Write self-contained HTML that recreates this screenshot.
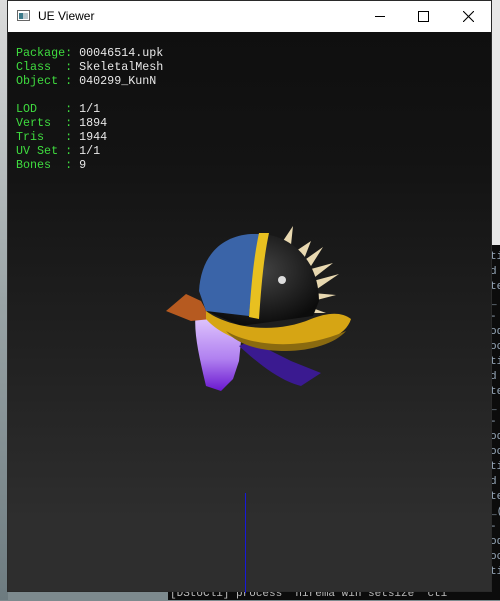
<!DOCTYPE html>
<html><head><style>
body{margin:0;width:500px;height:600px;overflow:hidden;background:#7d8a8e;position:relative;font-family:"Liberation Sans",sans-serif}
.con{position:absolute;background:#0c0c0c}
.win{position:absolute;left:7px;top:0;width:485px;height:592px;border:1px solid #2a2a2a;box-sizing:border-box;background:linear-gradient(#0f0f0f 31px,#131313 160px,#232323 380px,#2e2e2e 520px,#2e2e2e)}
.tb{position:absolute;left:0;top:0;width:483px;height:31px;background:#fff}
.tt{position:absolute;left:30px;top:8px;font-size:12px;color:#000}
.txt{position:absolute;left:8px;top:45px;font:11.7px/14px "Liberation Mono",monospace;color:#e8e8e8;white-space:pre;margin:0}
.g{color:#3fdc3f}
.ct{position:absolute;font:11px/14px "Liberation Mono",monospace;color:#bbb;white-space:pre}
</style></head><body>
<div style="position:absolute;left:0;top:0;width:8px;height:600px;background:linear-gradient(#dcdcdc,#9aa4a6 50%,#6d7b80)"></div>
<div class="con" style="left:168px;top:592px;width:332px;height:8px"></div>
<div class="ct" style="left:170px;top:587px">[DStoCli] process  hirema win setsize  cti</div>
<div class="con" style="left:490px;top:245px;width:10px;height:355px"></div>
<div style="position:absolute;left:490px;top:0;width:10px;height:245px;background:#e8e8e8"></div>
<div class="ct" style="left:490px;top:250px;color:#9ab;line-height:15px">ti
d
te
_
-
od
oc
ti
d
te
_
-
od
oc
ti
d
te
_(
-
od
oc
ti</div>
<div class="win">
<div class="tb">
<svg style="position:absolute;left:9px;top:9px" width="13" height="11"><rect x="0.5" y="0.5" width="12" height="10" fill="#fff" stroke="#666"/><rect x="2" y="3" width="4" height="6" fill="#3a7a8a"/><rect x="6" y="3" width="5" height="6" fill="#b9c7cc"/></svg>
<div class="tt">UE Viewer</div>
<div style="position:absolute;left:367px;top:15px;width:10px;height:1px;background:#000"></div>
<div style="position:absolute;left:410px;top:10px;width:9px;height:9px;border:1px solid #000"></div>
<svg style="position:absolute;left:455px;top:10px" width="11" height="11"><path d="M0 0L11 11M11 0L0 11" stroke="#000" stroke-width="1.1"/></svg>
</div>
<pre class="txt"><span class="g">Package:</span> 00046514.upk
<span class="g">Class  :</span> SkeletalMesh
<span class="g">Object :</span> 040299_KunN

<span class="g">LOD    :</span> 1/1
<span class="g">Verts  :</span> 1894
<span class="g">Tris   :</span> 1944
<span class="g">UV Set :</span> 1/1
<span class="g">Bones  :</span> 9</pre>
<div style="position:absolute;left:237px;top:492px;width:1px;height:100px;background:#1818d8"></div>
<svg style="position:absolute;left:143px;top:200px" width="220" height="200" viewBox="150 200 220 200">
<defs><linearGradient id="hair" x1="0" y1="0" x2="0" y2="1"><stop offset="0" stop-color="#e6d0ff"/><stop offset="0.6" stop-color="#b080f0"/><stop offset="1" stop-color="#6a18d0"/></linearGradient>
<radialGradient id="blk" cx="0.5" cy="0.4" r="0.6"><stop offset="0" stop-color="#444"/><stop offset="1" stop-color="#0c0c0c"/></radialGradient></defs>
<path d="M195 310 C192 330 198 355 205 385 L220 390 L232 378 L238 360 L240 340 L230 325Z" fill="url(#hair)"/>
<path d="M238 345 C260 365 280 380 300 385 L320 372 L290 360 L250 340Z" fill="#3a1a90"/>
<path d="M165 310 L185 293 L200 300 L210 318 L190 320Z" fill="#b65a20"/>
<g fill="#e8d8b0">
<path d="M282 240 L292 225 L290 244Z"/><path d="M295 250 L310 240 L303 258Z"/><path d="M305 258 L322 246 L310 265Z"/><path d="M310 268 L332 262 L314 276Z"/><path d="M312 280 L338 273 L316 288Z"/><path d="M312 292 L335 294 L312 300Z"/><path d="M306 305 L325 312 L304 312Z"/>
</g>
<path d="M198 290 C200 255 220 235 250 233 C290 230 318 260 318 300 L312 315 L240 325 L205 310Z" fill="url(#blk)"/>
<path d="M198 290 C200 255 220 235 250 233 L262 233 C255 260 250 290 248 315 L205 310Z" fill="#3a64a8"/>
<path d="M258 232 L268 232 C262 260 260 290 258 318 L248 316 C250 290 252 260 258 232Z" fill="#e8c020"/>
<circle cx="281" cy="279" r="4" fill="#ddd"/>
<path d="M205 310 C225 325 270 335 310 318 C325 312 340 310 350 318 C345 335 320 345 285 348 C250 346 220 335 205 318Z" fill="#d6a514"/>
<path d="M225 330 C250 345 300 350 345 330 C335 342 310 350 285 350 C255 350 235 342 225 330Z" fill="#8a6a10"/>
</svg>
</div>
</body></html>
